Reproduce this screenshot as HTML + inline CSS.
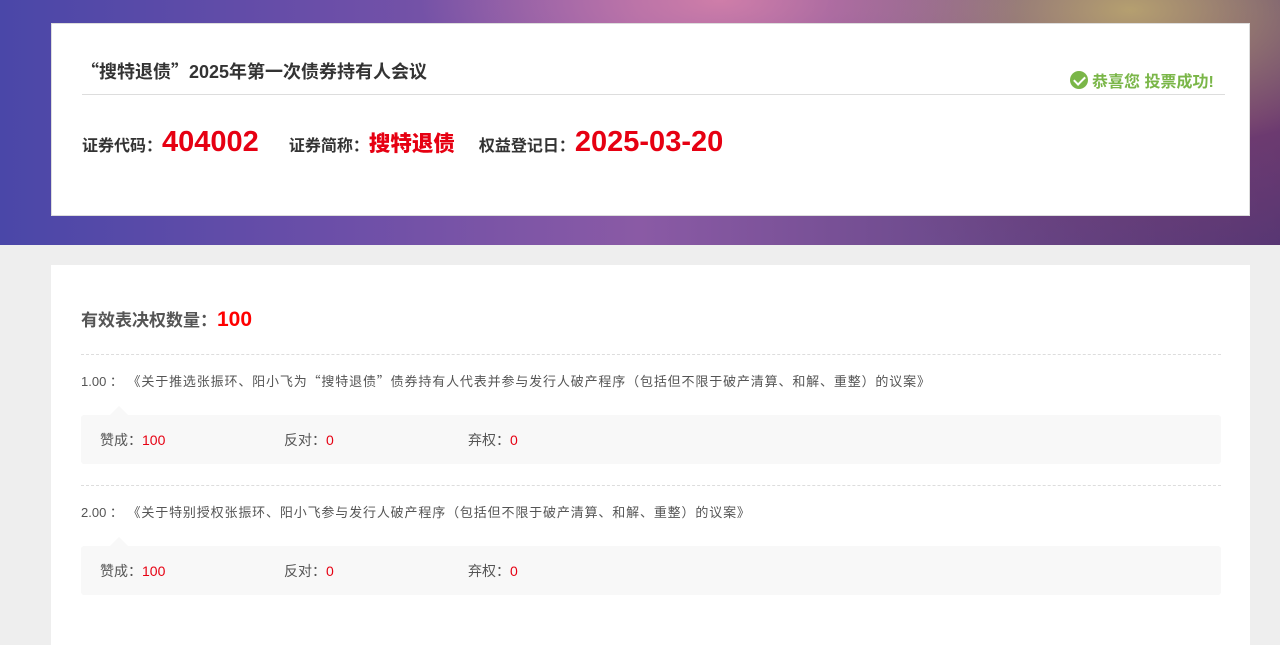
<!DOCTYPE html>
<html><head><meta charset="utf-8"><style>
*{margin:0;padding:0;box-sizing:border-box}
body{width:1280px;height:627px;overflow:hidden;background:#eeeeee;font-family:"Liberation Sans","Noto Sans CJK SC",sans-serif;position:relative}
.cjk{font-family:"Noto Sans CJK SC",sans-serif}
.band{position:absolute;left:0;top:0;width:1280px;height:245px;
background:
radial-gradient(ellipse 300px 120px at 720px 0px,rgba(215,130,170,.9),transparent),
radial-gradient(ellipse 300px 140px at 1130px 10px,rgba(190,170,110,.9),transparent),
radial-gradient(ellipse 400px 200px at 1250px 120px,rgba(120,60,110,.8),transparent),
linear-gradient(90deg,#4a47a8 0%,#6a4ea8 25%,#8a5aa5 50%,#6c4a8c 75%,#4a3475 100%);}
.card{position:absolute;left:51px;width:1199px;background:#fff}
.c1{top:23px;height:193px;border:1px solid #ddd}
.c2{top:265px;height:380px}
.title{position:absolute;left:29px;top:34px;font-size:18px;font-weight:bold;color:#333}
.hr{position:absolute;left:30px;top:70px;width:1143px;height:1px;background:#ddd}
.ok{position:absolute;left:1018px;top:44px;font-size:16px;font-weight:bold;color:#7ab648;display:flex;align-items:center}
.ok i{display:inline-block;width:18px;height:18px;border-radius:50%;background:#7ab648;margin-right:4px;position:relative}
.ok i:after{content:"";position:absolute;left:6px;top:3px;width:5px;height:9px;border:solid #fff;border-width:0 2px 2px 0;transform:rotate(45deg)}
.info{position:absolute;left:30px;top:102px;display:flex;align-items:baseline;color:#333;font-weight:bold;font-size:16px}
.info b{color:#e60012;font-size:29px;margin-right:30px}
.info b.s{font-size:21.5px;margin-right:24px;font-family:"Noto Sans CJK SC",sans-serif}
.votes{position:absolute;left:30px;top:41px;font-size:17px;font-weight:bold;color:#555}
.votes b{color:#f00;font-size:21px}
.dash{position:absolute;left:30px;width:1140px;border-top:1px dashed #ddd}
.item{position:absolute;left:30px;font-size:13px;color:#555}
.item .cjk{letter-spacing:0.85px}
.box{position:absolute;left:30px;width:1140px;height:49px;background:#f8f8f8;border-radius:3px;font-size:14px;color:#555}
.box:before{content:"";position:absolute;left:29px;top:-9px;border:9px solid transparent;border-top:0;border-bottom-color:#f8f8f8}
.box>span{position:absolute;top:15px;white-space:nowrap}
.box em{font-style:normal;color:#e60012}
</style></head><body>
<div class="band"></div>
<div class="card c1">
<div class="title"><span class="cjk">“</span>搜特退债<span class="cjk">”</span>2025年第一次债券持有人会议</div>
<div class="ok"><i></i>恭喜您 投票成功!</div>
<div class="hr"></div>
<div class="info">证券代码<span class="cjk">：</span><b>404002</b>证券简称<span class="cjk">：</span><b class="s">搜特退债</b>权益登记日<span class="cjk">：</span><b>2025-03-20</b></div>
</div>
<div class="card c2">
<div class="votes">有效表决权数量<span class="cjk">：</span><b>100</b></div>
<div class="dash" style="top:89px"></div>
<div class="item" style="top:106px">1.00 <span class="cjk">： 《关于推选张振环、阳小飞为“搜特退债”债券持有人代表并参与发行人破产程序（包括但不限于破产清算、和解、重整）的议案》</span></div>
<div class="box" style="top:150px"><span style="left:19px"><span class="cjk">赞成：</span><em>100</em></span><span style="left:203px"><span class="cjk">反对：</span><em>0</em></span><span style="left:387px"><span class="cjk">弃权：</span><em>0</em></span></div>
<div class="dash" style="top:220px"></div>
<div class="item" style="top:237px">2.00 <span class="cjk">： 《关于特别授权张振环、阳小飞参与发行人破产程序（包括但不限于破产清算、和解、重整）的议案》</span></div>
<div class="box" style="top:281px"><span style="left:19px"><span class="cjk">赞成：</span><em>100</em></span><span style="left:203px"><span class="cjk">反对：</span><em>0</em></span><span style="left:387px"><span class="cjk">弃权：</span><em>0</em></span></div>
</div>
</body></html>
